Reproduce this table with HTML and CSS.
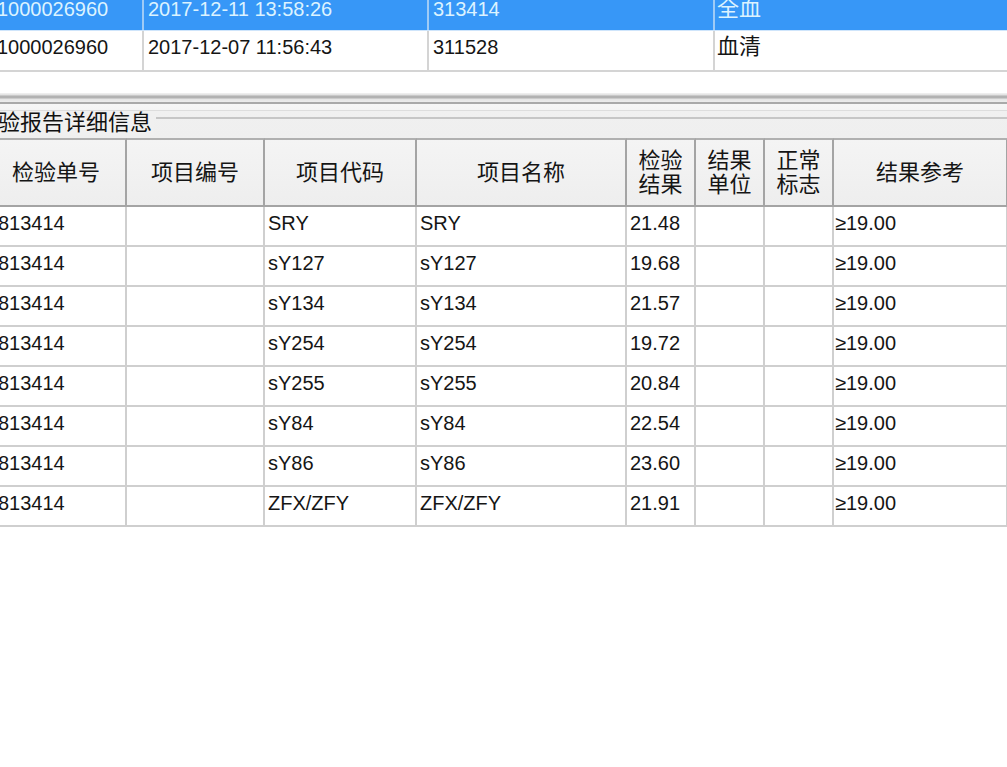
FILE: index.html
```html
<!DOCTYPE html>
<html lang="zh">
<head>
<meta charset="utf-8">
<title>检验报告</title>
<link rel="stylesheet" href="styles.css">
</head>
<body>
<div class="screen">
  <div class="list">
    <div class="lrow sel">
      <div class="lc c1">1000026960</div>
      <div class="lc c2">2017-12-11 13:58:26</div>
      <div class="lc c3">313414</div>
      <div class="lc c4 zh">全血</div>
    </div>
    <div class="lrow">
      <div class="lc c1">1000026960</div>
      <div class="lc c2">2017-12-07 11:56:43</div>
      <div class="lc c3">311528</div>
      <div class="lc c4 zh">血清</div>
    </div>
  </div>
  <div class="splitter"></div>
  <div class="group">
    <div class="group-title">
      <span class="title-text">验报告详细信息</span>
      <span class="rule"></span>
    </div>
    <div class="grid">
      <div class="grow head">
        <div class="hc">检验单号</div>
        <div class="hc">项目编号</div>
        <div class="hc">项目代码</div>
        <div class="hc">项目名称</div>
        <div class="hc two">检验<br>结果</div>
        <div class="hc two">结果<br>单位</div>
        <div class="hc two">正常<br>标志</div>
        <div class="hc">结果参考</div>
      </div>
      <div class="grow">
        <div class="dc first">813414</div><div class="dc"></div><div class="dc">SRY</div><div class="dc">SRY</div><div class="dc">21.48</div><div class="dc"></div><div class="dc"></div><div class="dc ref">≥19.00</div>
      </div>
      <div class="grow">
        <div class="dc first">813414</div><div class="dc"></div><div class="dc">sY127</div><div class="dc">sY127</div><div class="dc">19.68</div><div class="dc"></div><div class="dc"></div><div class="dc ref">≥19.00</div>
      </div>
      <div class="grow">
        <div class="dc first">813414</div><div class="dc"></div><div class="dc">sY134</div><div class="dc">sY134</div><div class="dc">21.57</div><div class="dc"></div><div class="dc"></div><div class="dc ref">≥19.00</div>
      </div>
      <div class="grow">
        <div class="dc first">813414</div><div class="dc"></div><div class="dc">sY254</div><div class="dc">sY254</div><div class="dc">19.72</div><div class="dc"></div><div class="dc"></div><div class="dc ref">≥19.00</div>
      </div>
      <div class="grow">
        <div class="dc first">813414</div><div class="dc"></div><div class="dc">sY255</div><div class="dc">sY255</div><div class="dc">20.84</div><div class="dc"></div><div class="dc"></div><div class="dc ref">≥19.00</div>
      </div>
      <div class="grow">
        <div class="dc first">813414</div><div class="dc"></div><div class="dc">sY84</div><div class="dc">sY84</div><div class="dc">22.54</div><div class="dc"></div><div class="dc"></div><div class="dc ref">≥19.00</div>
      </div>
      <div class="grow">
        <div class="dc first">813414</div><div class="dc"></div><div class="dc">sY86</div><div class="dc">sY86</div><div class="dc">23.60</div><div class="dc"></div><div class="dc"></div><div class="dc ref">≥19.00</div>
      </div>
      <div class="grow">
        <div class="dc first">813414</div><div class="dc"></div><div class="dc">ZFX/ZFY</div><div class="dc">ZFX/ZFY</div><div class="dc">21.91</div><div class="dc"></div><div class="dc"></div><div class="dc ref">≥19.00</div>
      </div>
    </div>
  </div>
</div>
</body>
</html>
```

FILE: styles.css
```css
html, body {
  margin: 0;
  padding: 0;
  background: #ffffff;
}

body {
  font-family: "Liberation Sans", "Noto Sans CJK SC", sans-serif;
  font-size: 20px;
  color: #151515;
  overflow: hidden;
}

.screen {
  width: 1007px;
  height: 767px;
  overflow: hidden;
  display: flex;
  flex-direction: column;
}

/* ---------- top list ---------- */
.list {
  flex: none;
  height: 93px;
  background: #ffffff;
  overflow: hidden;
}

.lrow {
  display: flex;
  margin-left: -9px;
  height: 41px;
  box-sizing: border-box;
  border-bottom: 2px solid #d4d4d4;
}

.lrow.sel {
  margin-top: -7px;
  height: 38px;
  background: #3797f7;
  color: #dcf3ff;
  border-bottom: 1px solid #cfe5fb;
}

.lc {
  box-sizing: border-box;
  padding: 6px 0 0 4px;
  line-height: 20px;
  white-space: nowrap;
  border-right: 2px solid #d4d4d4;
}

.lrow.sel .lc {
  border-right-color: #9fcbf6;
}

.lc.c1 { width: 153px; padding-left: 6px; }
.lc.c2 { width: 285px; }
.lc.c3 { width: 286px; }
.lc.c4 { flex: 1; border-right: none; padding-left: 2px; }

.zh {
  font-size: 22px;
}

/* ---------- splitter ---------- */
.splitter {
  flex: none;
  height: 11px;
  background: linear-gradient(to bottom,
    #f3f3f3 0px, #e0e0e0 2px,
    #b2b2b2 3px, #b2b2b2 5px,
    #e4e4e4 6px, #ececec 9px,
    #a9a9a9 9px, #a9a9a9 11px);
}

/* ---------- group box ---------- */
.group {
  flex: 1;
  display: flex;
  flex-direction: column;
}

.group-title {
  flex: none;
  height: 34px;
  display: flex;
  align-items: flex-start;
  background: linear-gradient(to bottom,
    #f6f6f6 0px, #f4f4f4 6px,
    #dddddd 6px, #dddddd 7px,
    #f0f0f0 7px, #efefef 34px);
}

.title-text {
  margin-left: -2px;
  margin-top: 7px;
  font-size: 22px;
  line-height: 24px;
  color: #111;
  background: #f0f0f0;
  padding-right: 2px;
  white-space: nowrap;
}

.rule {
  flex: 1;
  height: 2px;
  margin-top: 13px;
  margin-left: 2px;
  background: #c6c6c6;
}

/* ---------- grid ---------- */
.grid {
  margin-left: -13px;
  width: 1021px;
}

.grow {
  display: grid;
  grid-template-columns: 140px 138px 152px 210px 69px 69px 69px 174px;
}

.hc {
  box-sizing: border-box;
  height: 69px;
  border-top: 2px solid #b0b0b0;
  border-bottom: 2px solid #a4a4a4;
  border-right: 2px solid #a4a4a4;
  background: linear-gradient(to bottom, #f4f4f4, #eeeeee);
  display: flex;
  align-items: center;
  justify-content: center;
  text-align: center;
  font-size: 22px;
  line-height: 24px;
  white-space: nowrap;
}

.hc.two {
  line-height: 24px;
}

.dc {
  box-sizing: border-box;
  height: 40px;
  padding: 6px 0 0 3px;
  line-height: 20px;
  border-right: 2px solid #cfcfcf;
  border-bottom: 2px solid #cfcfcf;
  white-space: nowrap;
  overflow: hidden;
}

.dc.first {
  padding-left: 11px;
}

.dc.ref {
  padding-left: 1px;
}
```
